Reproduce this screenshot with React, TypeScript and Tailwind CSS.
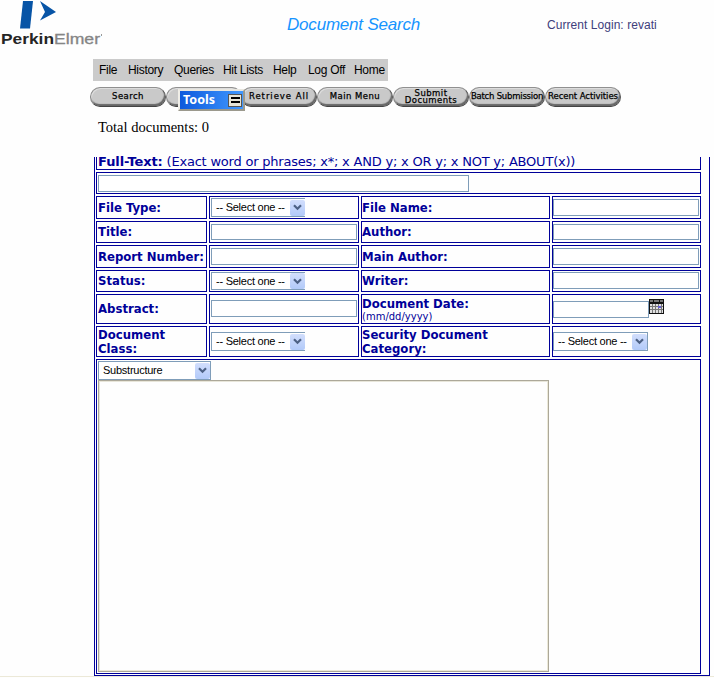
import type { ReactNode } from "react";

const menu = [
  { label: "File", w: "w-[29px]" },
  { label: "History", w: "w-[46px]" },
  { label: "Queries", w: "w-[49px]" },
  { label: "Hit Lists", w: "w-[50px]" },
  { label: "Help", w: "w-[35px]" },
  { label: "Log Off", w: "w-[46px]" },
  { label: "Home", w: "w-[28px]" },
];

function Logo() {
  return (
    <svg width="104" height="48" viewBox="0 0 104 48">
      <path d="M23 1H33L30 28.5H20Z" fill="#0754a6" />
      <path d="M40 1L56 12L40 20.5L45 12Z" fill="#0754a6" />
      <text x="1" y="43.5" fontFamily="Liberation Sans, sans-serif" fontSize="14" fontWeight="bold" fill="#252525" textLength="53" lengthAdjust="spacingAndGlyphs">Perkin</text>
      <text x="54" y="43.5" fontFamily="Liberation Sans, sans-serif" fontSize="14" fill="#858585" stroke="#858585" strokeWidth="0.3" textLength="46" lengthAdjust="spacingAndGlyphs">Elmer</text>
      <path d="M101.5 34V36" stroke="#999" />
    </svg>
  );
}

function Pill({ children, spacing = "tracking-[0.45px]" }: { children?: ReactNode; spacing?: string }) {
  return (
    <button
      className={`flex h-5 w-[76px] shrink-0 items-center justify-center rounded-full border border-t-[#909090] border-r-[#555] border-b-[#444] border-l-[#888] bg-[#c9c9c9] pb-px text-center font-['DejaVu_Sans',sans-serif] text-[8.5px] leading-[7px] whitespace-nowrap text-black shadow-[inset_-1px_-2px_1px_#666,inset_1px_1px_0_#ddd] ${spacing}`}
    >
      <span className="[-webkit-text-stroke:0.25px_black]">{children}</span>
    </button>
  );
}

function Arrow() {
  return (
    <span className="flex h-4 w-[15px] shrink-0 items-center justify-center rounded-[2px] bg-linear-to-b from-[#d2defc] to-[#b2caf9]">
      <svg width="9" height="7" viewBox="0 0 9 7">
        <path d="M1 1.2L4.5 4.7L8 1.2" fill="none" stroke="#4d6185" strokeWidth="2.2" />
      </svg>
    </span>
  );
}

function Select({ label = "-- Select one --", className = "h-[19px]" }: { label?: string; className?: string }) {
  return (
    <div className={`flex items-center justify-between border border-[#7f9db9] bg-white pl-1 font-['Liberation_Sans',sans-serif] text-[11px] tracking-[-0.25px] whitespace-nowrap text-black ${className}`}>
      <span>{label}</span>
      <Arrow />
    </div>
  );
}

function Input({ className = "" }: { className?: string }) {
  return <input className={`block border border-[#7f9db9] bg-white outline-none ${className}`} />;
}

function Cell({ children, className = "" }: { children?: ReactNode; className?: string }) {
  return <div className={`border border-[#000099] ${className}`}>{children}</div>;
}

function Label({ children, wide = false }: { children: ReactNode; wide?: boolean }) {
  return (
    <Cell className={`flex flex-col justify-center font-['DejaVu_Sans_Condensed','DejaVu_Sans',sans-serif] text-[13px] leading-[14px] font-bold whitespace-nowrap [font-stretch:condensed] ${wide ? "pl-0" : "pl-px"}`}>
      {children}
    </Cell>
  );
}

export default function App() {
  return (
    <div className="flex h-[678px] w-[714px] flex-col overflow-hidden bg-[#fefefe]">
      <header className="flex h-[59px] shrink-0 font-['Liberation_Sans',sans-serif]">
        <div className="w-[287px]"><Logo /></div>
        <h1 className="w-[260px] pt-[14px] text-[17px] leading-[22px] tracking-[-0.2px] text-[#1694ff] italic">Document Search</h1>
        <p className="pt-[17px] text-[12px] leading-4 tracking-[0.05px] text-[#40407c]">Current Login: revati</p>
      </header>
      <nav className="ml-[93px] flex h-[22px] w-[295px] shrink-0 items-center bg-[#cbcbcb] pl-1.5 font-['Liberation_Sans',sans-serif] text-[12px] tracking-[-0.3px] whitespace-nowrap text-black">
        {menu.map((m) => (
          <span key={m.label} className={`shrink-0 ${m.w}`}>{m.label}</span>
        ))}
      </nav>
      <div className="relative mt-1.5 ml-[90px] flex h-5 shrink-0">
        <Pill>Search</Pill>
        <Pill />
        <div className="-ml-px flex">
          <Pill spacing="tracking-[0.95px]">Retrieve All</Pill>
          <Pill>Main Menu</Pill>
          <Pill>Submit<br />Documents</Pill>
          <Pill spacing="tracking-[-0.22px]">Batch Submission</Pill>
          <Pill spacing="tracking-[-0.05px]">Recent Activities</Pill>
        </div>
        <div className="absolute top-[2px] left-[88px] flex h-[22px] w-[67px] items-center justify-between border-2 border-t-[#e8e6df] border-r-[#9b998d] border-b-[#9b998d] border-l-[#f0eee7] bg-linear-to-r from-[#0d59dc] to-[#4198ff] pr-px pl-[3px] font-['Noto_Sans',sans-serif] text-[12.5px] font-bold text-white">
          <span className="pt-px">Tools</span>
          <span className="flex h-[13px] w-[14px] flex-col items-center justify-center gap-[2px] border border-[#555] bg-[#e7e5d8]">
            <i className="h-[2px] w-[9px] bg-black" />
            <i className="h-[2px] w-[9px] bg-black" />
          </span>
        </div>
      </div>
      <p className="mt-3 ml-[98px] h-[38px] shrink-0 font-['Liberation_Serif',serif] text-[14.5px] leading-[17px] text-black">Total documents: 0</p>
      <main className="ml-[94px] flex h-[519px] w-[616px] shrink-0 flex-col gap-[2px] border border-t-0 border-[#000099] pr-2 pb-px pl-px font-['DejaVu_Sans',sans-serif] text-[#000099]">
        <Cell className="h-[13px] border-t-0 pl-px text-[13px] leading-[10px] tracking-[-0.21px] whitespace-nowrap">
          <b className="tracking-[-0.1px]">Full-Text:</b> (Exact word or phrases; x*; x AND y; x OR y; x NOT y; ABOUT(x))
        </Cell>
        <Cell className="h-[22px] pt-[2px] pl-px"><Input className="h-[17px] w-[371px]" /></Cell>
        <div className="grid grid-cols-[111px_150px_189px_149px] grid-rows-[23px_22px_23px_22px_30px_31px] gap-[2px]">
          <Label>File Type:</Label>
          <Cell className="pt-px pl-px"><Select className="h-[19px] w-[94px] border-r-0" /></Cell>
          <Label wide>File Name:</Label>
          <Cell className="pt-[2px]"><Input className="h-[17px] w-[146px]" /></Cell>
          <Label>Title:</Label>
          <Cell className="pt-[2px] pl-px"><Input className="h-4 w-[146px]" /></Cell>
          <Label wide>Author:</Label>
          <Cell className="pt-[2px]"><Input className="h-4 w-[146px]" /></Cell>
          <Label>Report Number:</Label>
          <Cell className="pt-[2px] pl-px"><Input className="h-[17px] w-[146px]" /></Cell>
          <Label wide>Main Author:</Label>
          <Cell className="pt-[2px]"><Input className="h-[17px] w-[146px]" /></Cell>
          <Label>Status:</Label>
          <Cell className="pt-px pl-px"><Select className="h-[18px] w-[94px] border-r-0" /></Cell>
          <Label wide>Writer:</Label>
          <Cell className="pt-px"><Input className="h-[17px] w-[146px]" /></Cell>
          <Label>Abstract:</Label>
          <Cell className="pt-[5px] pl-px"><Input className="h-[17px] w-[146px]" /></Cell>
          <Label wide>
            <span className="leading-[15px]">Document Date:</span>
            <span className="font-['DejaVu_Sans',sans-serif] text-[10px] leading-[11px] font-normal [font-stretch:normal]">(mm/dd/yyyy)</span>
          </Label>
          <Cell className="flex items-start pt-1">
            <Input className="mt-[2px] h-[17px] w-24" />
            <svg width="15" height="15" viewBox="0 0 15 15" shapeRendering="crispEdges">
              <rect width="15" height="15" fill="#111" />
              <path d="M1 1H4V3H1ZM5 1H10V3H5ZM11 1H14V3H11Z" fill="#777" />
              <path d="M1 5H14V14H1Z" fill="#e0e0e0" />
              <path d="M1 7.5H14M1 10.5H14M3.5 5V14M6.5 5V14M9.5 5V14M12.5 5V14" stroke="#777" />
              <rect x="9" y="7" width="3" height="2" fill="#665fd5" />
            </svg>
          </Cell>
          <Label>Document<br />Class:</Label>
          <Cell className="pt-[5px] pl-px"><Select className="h-[19px] w-[94px] border-r-0" /></Cell>
          <Label wide>Security Document<br />Category:</Label>
          <Cell className="pt-[5px]"><Select className="h-[19px] w-[95px]" /></Cell>
        </div>
        <Cell className="h-[315px] pt-px pl-px">
          <Select label="Substructure" className="h-[19px] w-[113px]" />
          <div className="h-[292px] w-[451px] border border-[#aca899] shadow-[inset_1px_1px_0_#e8e6da,inset_-1px_-1px_0_#ece9d8]" />
        </Cell>
      </main>
      <div className="h-px w-full shrink-0 bg-[#ece9d8]" />
    </div>
  );
}
